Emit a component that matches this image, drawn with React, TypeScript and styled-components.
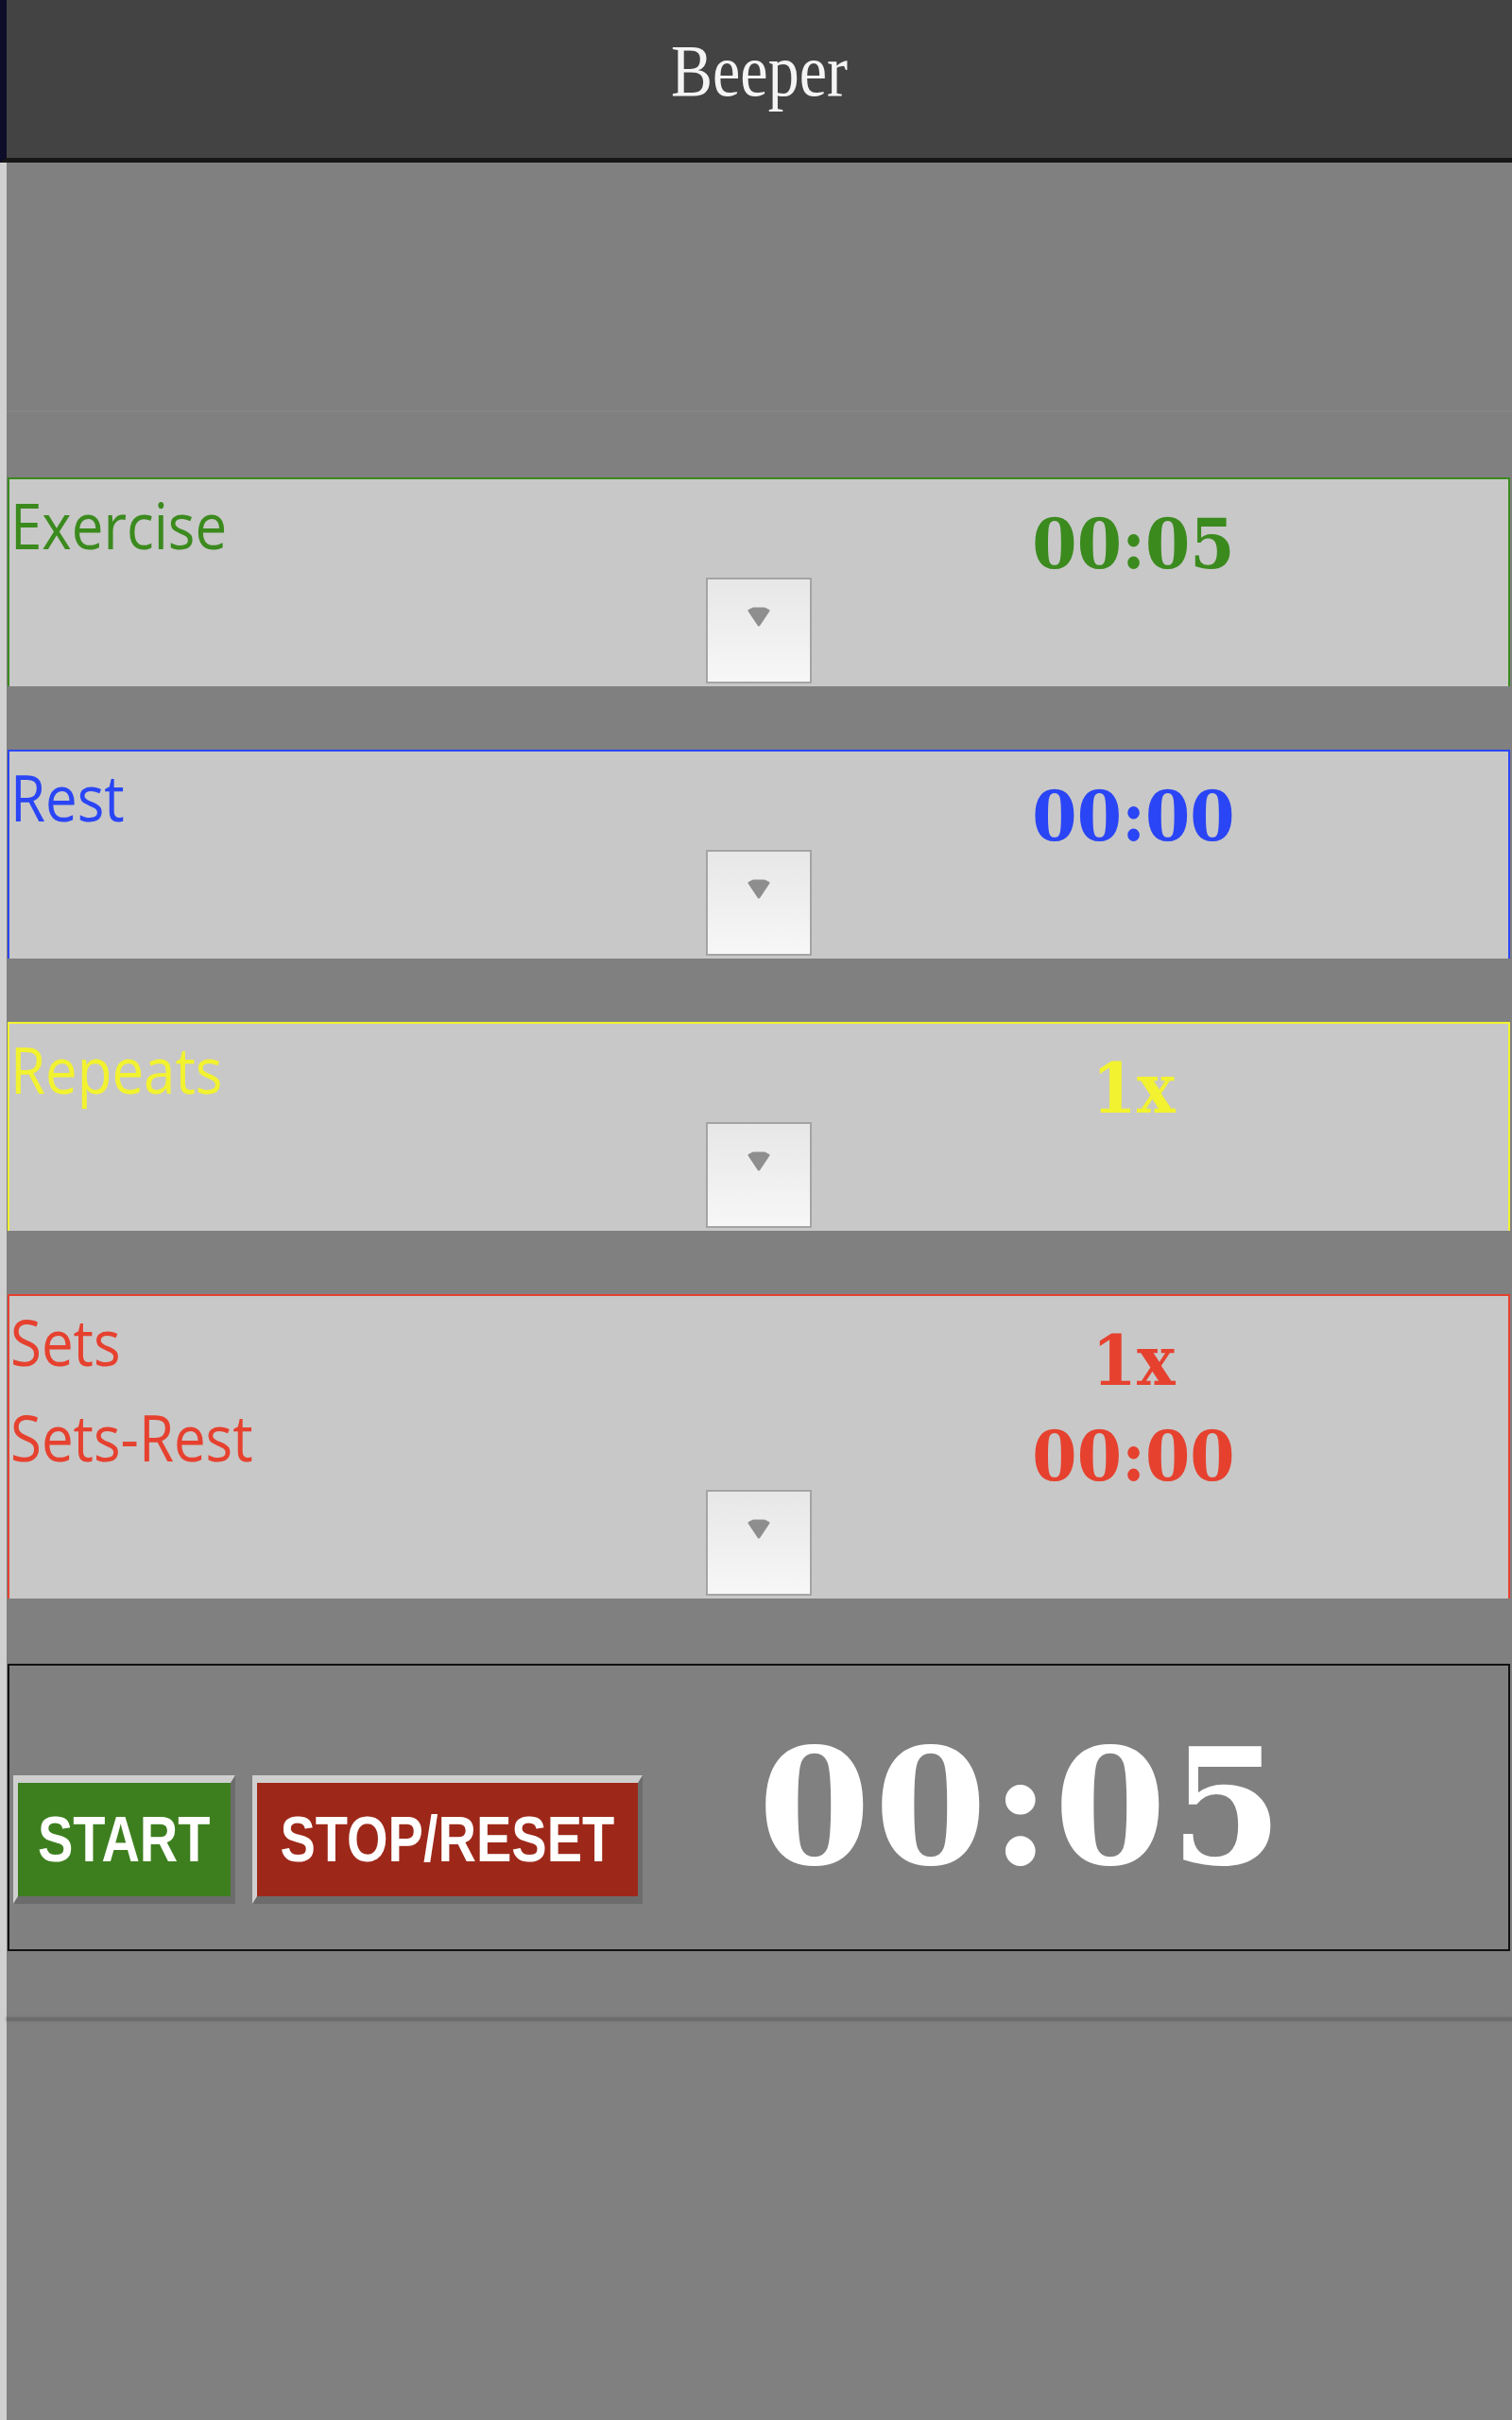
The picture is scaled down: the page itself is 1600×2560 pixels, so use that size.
import React from 'react';
import styled, { createGlobalStyle } from 'styled-components';

const GlobalStyle = createGlobalStyle`
  html, body {
    margin: 0;
    padding: 0;
    background: #d0d0d0;
  }

  body {
    min-height: 2560px;
    font-family: "Open Sans", "DejaVu Sans", sans-serif;
  }
`;

const Page = styled.div`
  width: 1600px;
  min-height: 2560px;
  display: flex;
  flex-direction: column;
`;

const Header = styled.header`
  height: 121px;
  padding-top: 46px;
  background: #434343;
  border-left: 7px solid #0d0d2a;
  border-bottom: 5px solid #171717;
  text-align: center;
`;

const Title = styled.h1`
  display: inline-block;
  margin: 0;
  font-family: "Liberation Serif", "DejaVu Serif", serif;
  font-weight: normal;
  font-size: 66px;
  line-height: 1;
  color: #f4f4f4;
  transform: scaleY(1.18);
  transform-origin: 50% 55px;
`;

const Content = styled.main`
  flex: 1;
  display: flex;
  flex-direction: column;
  border-left: 7px solid #d0d0d0;
  padding-left: 1px;
  padding-right: 2px;
  background: #808080;
`;

const Band = styled.div`
  height: 262px;
  margin-left: -1px;
  margin-right: -2px;
  border-bottom: 2px solid #858585;
  margin-bottom: 69px;
`;

const Panel = styled.section<{ $color: string }>`
  display: flex;
  flex-direction: column;
  background: #c8c8c8;
  border: 2px solid ${(p) => p.$color};
  border-bottom: 0;
  color: ${(p) => p.$color};
  margin-bottom: 67px;
`;

const Row = styled.div`
  height: 101px;
  display: grid;
  grid-template-columns: 1fr 1fr;
  align-items: start;
`;

const Label = styled.span`
  display: inline-block;
  justify-self: start;
  margin-top: 21px;
  margin-left: 1px;
  font-family: "Open Sans", "DejaVu Sans", sans-serif;
  font-size: 60px;
  line-height: 1;
  transform: scaleY(1.13);
  transform-origin: 0 53px;
`;

const Value = styled.span`
  display: inline-block;
  justify-self: center;
  margin-top: 36px;
  font-family: "DejaVu Serif", "Liberation Serif", serif;
  font-weight: bold;
  font-size: 68px;
  line-height: 1;
  transform: scaleY(1.06);
  transform-origin: 50% 57px;
`;

const SelectBox = styled.div`
  align-self: center;
  box-sizing: border-box;
  width: 112px;
  height: 112px;
  margin: 3px 0 3px;
  padding-top: 28px;
  display: flex;
  justify-content: center;
  align-items: flex-start;
  border: 2px solid #a4a4a4;
  background: linear-gradient(#e7e7e7, #f7f7f7);
`;

const Caret = () => (
  <svg width="32" height="24" viewBox="0 0 32 24">
    <path
      d="M6 5 L10 3 L22 3 L26 5 L16 20 Z"
      fill="#8e8e8e"
      stroke="#8e8e8e"
      strokeWidth="3"
      strokeLinejoin="round"
    />
  </svg>
);

const TimerBox = styled.section`
  height: 300px;
  padding-left: 4px;
  display: flex;
  align-items: flex-start;
  border: 2px solid #111;
  margin-top: 2px;
`;

const Button = styled.button<{ $bg: string; $pad: number }>`
  box-sizing: content-box;
  height: 120px;
  padding: 0 ${(p) => p.$pad}px;
  margin: 116px 18px 0 0;
  display: inline-flex;
  align-items: center;
  border-style: solid;
  border-width: 8px 5px 8px 5px;
  border-color: #cfcfcf #6c6c6c #6c6c6c #cfcfcf;
  background: ${(p) => p.$bg};
  color: #fff;
  font-family: "Liberation Sans", Arial, sans-serif;
  font-weight: bold;
  font-size: 56px;
  line-height: 1;
  cursor: pointer;
`;

const ButtonText = styled.span`
  display: inline-block;
  transform: scaleY(1.22);
`;

const BigTime = styled.span`
  margin: 64px 0 0 104px;
  font-family: "DejaVu Serif", "Liberation Serif", serif;
  font-weight: bold;
  font-size: 171px;
  letter-spacing: 4px;
  line-height: 1;
  color: #fff;
`;

const Rule = styled.div`
  height: 4px;
  margin: 70px -2px 0 -1px;
  background: #6c6c6c;
  box-shadow: 0 0 3px #6c6c6c;
`;

interface Setting {
  label: string;
  value: string;
}

interface SettingPanelProps {
  color: string;
  rows: Setting[];
}

const SettingPanel: React.FunctionComponent<SettingPanelProps> = ({ color, rows }) => (
  <Panel $color={color}>
    {rows.map((row) => (
      <Row key={row.label}>
        <Label>{row.label}</Label>
        <Value>{row.value}</Value>
      </Row>
    ))}
    <SelectBox>
      <Caret />
    </SelectBox>
  </Panel>
);

export default function App(): React.ReactElement {
  return (
    <Page>
      <GlobalStyle />
      <Header>
        <Title>Beeper</Title>
      </Header>
      <Content>
        <Band />
        <SettingPanel color="#3b8a1e" rows={[{ label: 'Exercise', value: '00:05' }]} />
        <SettingPanel color="#2a45f5" rows={[{ label: 'Rest', value: '00:00' }]} />
        <SettingPanel color="#f2f230" rows={[{ label: 'Repeats', value: '1x' }]} />
        <SettingPanel
          color="#e6412f"
          rows={[
            { label: 'Sets', value: '1x' },
            { label: 'Sets-Rest', value: '00:00' },
          ]}
        />
        <TimerBox>
          <Button $bg="#3d7f1f" $pad={21}>
            <ButtonText>START</ButtonText>
          </Button>
          <Button $bg="#9d2819" $pad={25}>
            <ButtonText>STOP/RESET</ButtonText>
          </Button>
          <BigTime>00:05</BigTime>
        </TimerBox>
        <Rule />
      </Content>
    </Page>
  );
}
